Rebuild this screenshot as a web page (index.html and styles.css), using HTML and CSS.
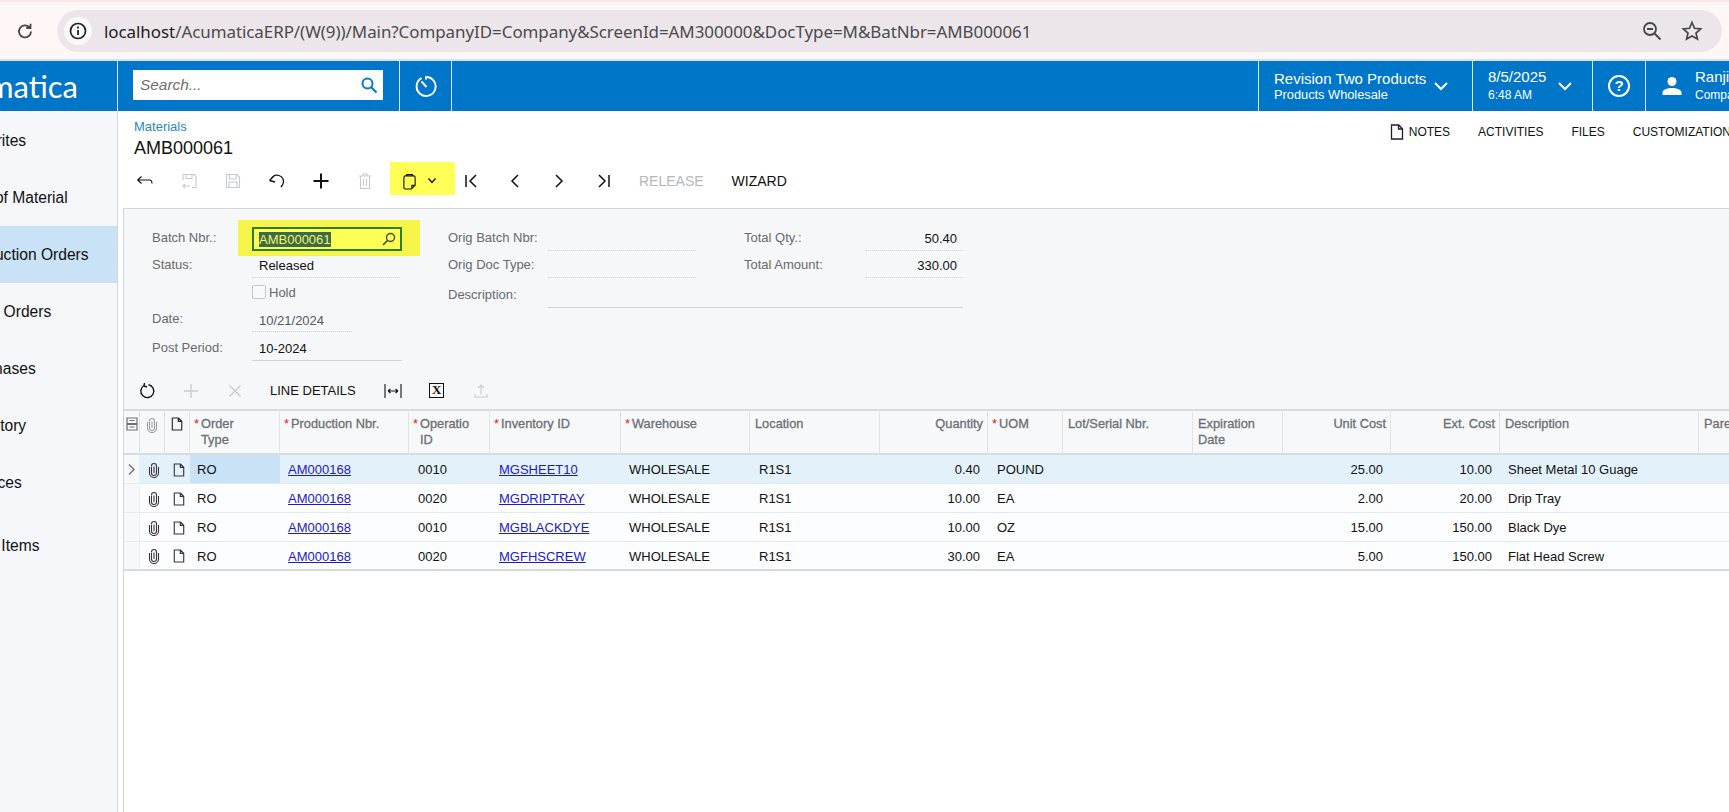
FILE: index.html
```html
<!DOCTYPE html>
<html lang="en">
<head>
<meta charset="utf-8">
<title>Materials - AMB000061</title>
<link rel="stylesheet" href="styles.css">
</head>
<body>
<svg class="defs" aria-hidden="true">
  <symbol id="i-note" viewBox="0 0 14 16"><path d="M1.500 1h7.200l3.800 3.800V15h-11zM8.500 1v4h4" fill="none" stroke="currentColor" stroke-width="1.300"/></symbol>
  <symbol id="i-clip" viewBox="0 0 12 16"><path d="M3.500 4.500v6.500a2.500 2.500 0 0 0 5 0V4a2.500 2.500 0 0 0-5 0M6 4.500v6.500M1.500 5v6a4.500 4.500 0 0 0 9 0V5" fill="none" stroke="currentColor" stroke-width="1.100"/></symbol>
  <symbol id="i-floppy" viewBox="0 0 18 18"><path d="M2.500 2.500h10.500l2.500 2.500v10.500h-13zM5.500 2.500v4.500h6.500v-4.500M5 15.500v-5.500h8v5.500" fill="none" stroke="currentColor" stroke-width="1.100"/></symbol>
</svg>

<header class="chrome">
  <svg class="chrome-reload" width="20" height="20" viewBox="0 0 20 20"><path d="M16 10.500a6 6 0 1 1-1.700-4.300M15.500 2.800v4.200h-4.200" fill="none" stroke="#474747" stroke-width="1.800"/></svg>
  <div class="urlbar">
    <span class="info-bubble"><svg width="20" height="20" viewBox="0 0 20 20"><circle cx="10" cy="10" r="7.500" fill="none" stroke="#222" stroke-width="1.700"/><path d="M10 9v5M10 5.600v1.800" stroke="#222" stroke-width="1.800"/></svg></span>
    <span class="url"><span class="url-host">localhost</span>/AcumaticaERP/(W(9))/Main?CompanyID=Company&amp;ScreenId=AM300000&amp;DocType=M&amp;BatNbr=AMB000061</span>
    <svg class="chrome-zoom" width="22" height="22" viewBox="0 0 22 22"><circle cx="9" cy="9" r="6" fill="none" stroke="#474747" stroke-width="1.800"/><path d="M6 9h6M13.500 13.500l6 6" stroke="#474747" stroke-width="1.800"/></svg>
    <svg class="chrome-star" width="22" height="22" viewBox="0 0 22 22"><path d="M11 2.500l2.500 5.800 6.200.6-4.700 4.100 1.400 6.100L11 15.900l-5.400 3.200 1.400-6.100-4.700-4.100 6.200-.6z" fill="none" stroke="#474747" stroke-width="1.700"/></svg>
  </div>
</header>

<nav class="appbar">
  <div class="logo-cell"><span class="logo">Acumatica</span></div>
  <div class="search-cell">
    <div class="search"><span class="search-text">Search...</span>
      <svg width="18" height="18" viewBox="0 0 18 18"><circle cx="7.500" cy="7.500" r="5" fill="none" stroke="#0b78c8" stroke-width="2"/><path d="M11 11l5.500 5.500" stroke="#0b78c8" stroke-width="2.200"/></svg>
    </div>
  </div>
  <div class="timer-cell"><svg width="24" height="24" viewBox="0 0 24 24"><path d="M7.500 4.200a9.500 9.500 0 1 0 4.500-1.200v2.500M7.500 7.500l5 5.500" fill="none" stroke="#fff" stroke-width="1.900"/></svg></div>
  <div class="bar-spacer"></div>
  <div class="bar-cell company-cell">
    <div class="bar-stack"><span class="bar-top">Revision Two Products</span><span class="bar-sub">Products Wholesale</span></div>
    <svg class="chev" width="16" height="16" viewBox="0 0 16 16"><path d="M2 5l6 6 6-6" fill="none" stroke="#fff" stroke-width="2"/></svg>
  </div>
  <div class="bar-cell date-cell">
    <div class="bar-stack"><span class="bar-top">8/5/2025</span><span class="bar-time">6:48 AM</span></div>
    <svg class="chev" width="16" height="16" viewBox="0 0 16 16"><path d="M2 5l6 6 6-6" fill="none" stroke="#fff" stroke-width="2"/></svg>
  </div>
  <div class="bar-cell help-cell"><span class="help">?</span></div>
  <div class="bar-cell user-cell">
    <svg class="user-icon" width="20" height="20" viewBox="0 0 20 20"><circle cx="10" cy="5.500" r="4.500" fill="#fff"/><path d="M.5 19v-2.500c0-3 5-4.500 9.500-4.500s9.500 1.500 9.500 4.500V19z" fill="#fff"/></svg>
    <div class="bar-stack user-stack"><span class="bar-top">Ranjith</span><span class="bar-time">Company</span></div>
  </div>
</nav>

<div class="main">
  <aside class="sidebar">
    <a class="nav-item">Favorites</a>
    <a class="nav-item">Bills of Material</a>
    <a class="nav-item is-active">Production Orders</a>
    <a class="nav-item">Prod. Orders</a>
    <a class="nav-item">Purchases</a>
    <a class="nav-item">Inventory</a>
    <a class="nav-item">Services</a>
    <a class="nav-item nav-last">Stock Items</a>
  </aside>

  <main class="content">
    <div class="page-head">
      <div class="page-titles">
        <a class="crumb">Materials</a>
        <div class="page-title">AMB000061</div>
      </div>
      <div class="tabs">
        <span class="tab"><svg class="tab-note" width="14" height="16"><use href="#i-note"/></svg>NOTES</span>
        <span class="tab">ACTIVITIES</span>
        <span class="tab">FILES</span>
        <span class="tab">CUSTOMIZATION</span>
      </div>
    </div>

    <div class="toolbar">
      <button class="tb"><svg width="18" height="18" viewBox="0 0 18 18"><path d="M1.500 8h12c1.500 0 2.500 1.500 2.500 3.500M1.500 8l4-3.500M1.500 8l4 3.500" fill="none" stroke="#111" stroke-width="1.100"/></svg></button>
      <button class="tb tb-off"><svg width="18" height="18" viewBox="0 0 18 18"><path d="M3 8V2.500h11l2 2v11h-4M6 2.500v4h6v-4M10 14H3M5 12l-2 2 2 2" fill="none" stroke="currentColor" stroke-width="1.100"/></svg></button>
      <button class="tb tb-off"><svg width="18" height="18"><use href="#i-floppy"/></svg></button>
      <button class="tb"><svg width="18" height="18" viewBox="0 0 18 18"><path d="M1.500 8.500l4.500-4.500M1.500 8.500l5.500 1.500M2 8.500C4 4.500 7.500 2.500 11 3.500c4 1.200 6 5.500 3.500 9.500l-1.500 2" fill="none" stroke="#111" stroke-width="1.300"/></svg></button>
      <button class="tb"><svg width="18" height="18" viewBox="0 0 18 18"><path d="M9 1.500v15M1.500 9h15" stroke="#111" stroke-width="2"/></svg></button>
      <button class="tb tb-off"><svg width="18" height="18" viewBox="0 0 18 18"><path d="M3 4h12M7 4V2h4v2M4.500 4v12.500h9V4M7.500 7v7M10.500 7v7" fill="none" stroke="currentColor" stroke-width="1.100"/></svg></button>
      <div class="paste-group">
        <svg width="15" height="17" viewBox="0 0 16 18"><path d="M2 5c0-1 .5-2 1.500-2h9c1 0 1.500 1 1.500 2v8l-4 4H3.500C2.500 17 2 16 2 15zM5 3V1.500h6V3M14 13h-3.500v4" fill="none" stroke="#111" stroke-width="1.200"/></svg>
        <svg width="10" height="8" viewBox="0 0 10 8"><path d="M1.500 1.500L5 5.500l3.500-4" fill="none" stroke="#111" stroke-width="1.400"/></svg>
      </div>
      <button class="tb tb-first"><svg width="18" height="18" viewBox="0 0 18 18"><path d="M3 3v12M13 3L7 9l6 6" fill="none" stroke="#111" stroke-width="1.500"/></svg></button>
      <button class="tb"><svg width="18" height="18" viewBox="0 0 18 18"><path d="M12 3L6 9l6 6" fill="none" stroke="#111" stroke-width="1.500"/></svg></button>
      <button class="tb"><svg width="18" height="18" viewBox="0 0 18 18"><path d="M6 3l6 6-6 6" fill="none" stroke="#111" stroke-width="1.500"/></svg></button>
      <button class="tb"><svg width="18" height="18" viewBox="0 0 18 18"><path d="M15 3v12M5 3l6 6-6 6" fill="none" stroke="#111" stroke-width="1.500"/></svg></button>
      <span class="tb-text tb-release">RELEASE</span>
      <span class="tb-text tb-wizard">WIZARD</span>
    </div>

    <section class="panel">
      <div class="form">
        <div class="form-col">
          <div class="row"><span class="lbl">Batch Nbr.:</span>
            <div class="batch">
              <span class="batch-glow"></span>
              <div class="batch-input"><span class="batch-sel">AMB000061</span>
                <svg width="16" height="16" viewBox="0 0 16 16"><circle cx="9.500" cy="6.500" r="4" fill="none" stroke="#3f4a1e" stroke-width="1.400"/><path d="M6.500 9.500L2 14" stroke="#3f4a1e" stroke-width="1.600"/></svg>
              </div>
            </div>
          </div>
          <div class="row"><span class="lbl">Status:</span><span class="val dotted w148">Released</span></div>
          <div class="row"><span class="lbl"></span><span class="hold"><span class="check"></span>Hold</span></div>
          <div class="row"><span class="lbl">Date:</span><span class="val val-muted dotted w100">10/21/2024</span></div>
          <div class="row row-tall"><span class="lbl">Post Period:</span><span class="val solid w150">10-2024</span></div>
        </div>
        <div class="form-col">
          <div class="row"><span class="lbl">Orig Batch Nbr:</span><span class="val dotted w148"></span></div>
          <div class="row"><span class="lbl">Orig Doc Type:</span><span class="val dotted w148"></span></div>
          <div class="row row-desc"><span class="lbl">Description:</span><span class="val solid w415"></span></div>
        </div>
        <div class="form-col col-totals">
          <div class="row"><span class="lbl lbl-total">Total Qty.:</span><span class="val dotted num">50.40</span></div>
          <div class="row"><span class="lbl lbl-total">Total Amount:</span><span class="val dotted num">330.00</span></div>
        </div>
      </div>

      <div class="grid-bar">
        <button class="gb"><svg width="18" height="18" viewBox="0 0 18 18"><path d="M6 3.500a6.500 6.500 0 1 0 4.500-.8M6.500 1L6 4l3 1" fill="none" stroke="#111" stroke-width="1.400"/></svg></button>
        <button class="gb gb-off"><svg width="16" height="16" viewBox="0 0 16 16"><path d="M8 1v14M1 8h14" stroke="currentColor" stroke-width="1.400"/></svg></button>
        <button class="gb gb-off"><svg width="16" height="16" viewBox="0 0 16 16"><path d="M2.500 2.500l11 11M13.500 2.500l-11 11" stroke="currentColor" stroke-width="1.300"/></svg></button>
        <span class="gb-text">LINE DETAILS</span>
        <button class="gb gb-fit"><svg width="18" height="16" viewBox="0 0 18 16"><path d="M1 1v14M17 1v14M4 8h10M4 8l2.500-2M4 8l2.500 2M14 8l-2.500-2M14 8l-2.500 2" fill="none" stroke="#111" stroke-width="1.100"/></svg></button>
        <button class="gb"><span class="excel">X</span></button>
        <button class="gb gb-off"><svg width="16" height="16" viewBox="0 0 16 16"><path d="M8 11V2M5 5l3-3 3 3M2 11v3h12v-3" fill="none" stroke="currentColor" stroke-width="1.100"/></svg></button>
      </div>

      <div class="grid">
        <div class="gh gh-icon"><svg width="12" height="14" viewBox="0 0 12 14"><path d="M1 1h10v5.500H1zM1 7.500h10V13H1zM3.500 3.500h5M3.500 10h5" fill="none" stroke="#6d7176" stroke-width="1.200"/></svg></div>
        <div class="gh gh-icon"><svg class="clip-head" width="12" height="16"><use href="#i-clip"/></svg></div>
        <div class="gh gh-icon"><svg class="note-ico" width="12" height="14"><use href="#i-note"/></svg></div>
        <div class="gh gh-star"><span class="star">*</span>Order<br>Type</div>
        <div class="gh gh-star"><span class="star">*</span>Production Nbr.</div>
        <div class="gh gh-star"><span class="star">*</span>Operatio<br>ID</div>
        <div class="gh gh-star"><span class="star">*</span>Inventory ID</div>
        <div class="gh gh-star"><span class="star">*</span>Warehouse</div>
        <div class="gh">Location</div>
        <div class="gh gh-num">Quantity</div>
        <div class="gh gh-star"><span class="star">*</span>UOM</div>
        <div class="gh">Lot/Serial Nbr.</div>
        <div class="gh">Expiration<br>Date</div>
        <div class="gh gh-num">Unit Cost</div>
        <div class="gh gh-num">Ext. Cost</div>
        <div class="gh">Description</div>
        <div class="gh">Parent</div>

        <div class="gr is-current">
          <div class="gc gc-gutter"><svg width="9" height="13" viewBox="0 0 9 13"><path d="M2 1.500l5 5-5 5" fill="none" stroke="#6d7176" stroke-width="1.400"/></svg></div>
          <div class="gc gc-icon"><svg width="12" height="16"><use href="#i-clip"/></svg></div>
          <div class="gc gc-icon"><svg width="12" height="14"><use href="#i-note"/></svg></div>
          <div class="gc gc-focus gc-type">RO</div><div class="gc"><a class="lnk">AM000168</a></div><div class="gc">0010</div><div class="gc"><a class="lnk">MGSHEET10</a></div><div class="gc">WHOLESALE</div><div class="gc">R1S1</div><div class="gc gc-num">0.40</div><div class="gc">POUND</div><div class="gc"></div><div class="gc"></div><div class="gc gc-num">25.00</div><div class="gc gc-num">10.00</div><div class="gc">Sheet Metal 10 Guage</div><div class="gc"></div>
        </div>
        <div class="gr">
          <div class="gc gc-gutter"></div>
          <div class="gc gc-icon"><svg width="12" height="16"><use href="#i-clip"/></svg></div>
          <div class="gc gc-icon"><svg width="12" height="14"><use href="#i-note"/></svg></div>
          <div class="gc gc-type">RO</div><div class="gc"><a class="lnk">AM000168</a></div><div class="gc">0020</div><div class="gc"><a class="lnk">MGDRIPTRAY</a></div><div class="gc">WHOLESALE</div><div class="gc">R1S1</div><div class="gc gc-num">10.00</div><div class="gc">EA</div><div class="gc"></div><div class="gc"></div><div class="gc gc-num">2.00</div><div class="gc gc-num">20.00</div><div class="gc">Drip Tray</div><div class="gc"></div>
        </div>
        <div class="gr">
          <div class="gc gc-gutter"></div>
          <div class="gc gc-icon"><svg width="12" height="16"><use href="#i-clip"/></svg></div>
          <div class="gc gc-icon"><svg width="12" height="14"><use href="#i-note"/></svg></div>
          <div class="gc gc-type">RO</div><div class="gc"><a class="lnk">AM000168</a></div><div class="gc">0010</div><div class="gc"><a class="lnk">MGBLACKDYE</a></div><div class="gc">WHOLESALE</div><div class="gc">R1S1</div><div class="gc gc-num">10.00</div><div class="gc">OZ</div><div class="gc"></div><div class="gc"></div><div class="gc gc-num">15.00</div><div class="gc gc-num">150.00</div><div class="gc">Black Dye</div><div class="gc"></div>
        </div>
        <div class="gr gr-last">
          <div class="gc gc-gutter"></div>
          <div class="gc gc-icon"><svg width="12" height="16"><use href="#i-clip"/></svg></div>
          <div class="gc gc-icon"><svg width="12" height="14"><use href="#i-note"/></svg></div>
          <div class="gc gc-type">RO</div><div class="gc"><a class="lnk">AM000168</a></div><div class="gc">0020</div><div class="gc"><a class="lnk">MGFHSCREW</a></div><div class="gc">WHOLESALE</div><div class="gc">R1S1</div><div class="gc gc-num">30.00</div><div class="gc">EA</div><div class="gc"></div><div class="gc"></div><div class="gc gc-num">5.00</div><div class="gc gc-num">150.00</div><div class="gc">Flat Head Screw</div><div class="gc"></div>
        </div>
      </div>
      <div class="grid-empty"></div>
    </section>
  </main>
</div>
</body>
</html>
```

FILE: styles.css
```css
* { box-sizing: border-box; }
html, body { margin: 0; height: 812px; overflow: hidden; background: #fff; }
body { font-family: "Liberation Sans", Arial, sans-serif; font-size: 13px; color: #111; display: flex; flex-direction: column; }
.defs { display: none; }
button { border: 0; background: none; padding: 0; font: inherit; color: inherit; display: flex; align-items: center; justify-content: center; }

/* browser chrome */
.chrome { height: 59px; flex: none; background: #fff6f6; border-top: 2px solid #fbe8e8; display: flex; align-items: flex-start; padding: 8px 7px 0 15px; gap: 22px; }
.chrome-reload { margin-top: 11px; flex: none; }
.urlbar { flex: 1; height: 42px; border-radius: 21px; background: #ece6ea; display: flex; align-items: center; padding: 0 19px 0 7px; }
.info-bubble { width: 28px; height: 28px; border-radius: 50%; background: #fbf8fa; display: flex; align-items: center; justify-content: center; margin-right: 12px; flex: none; }
.url { font-family: "Noto Sans", "Open Sans", sans-serif; font-size: 16.950px; color: #4a4a4e; white-space: nowrap; flex: 1; letter-spacing: -.05px; }
.url-host { color: #1c1c1e; }
.chrome-zoom { margin-right: 18px; }

/* blue application bar */
.appbar { height: 52px; flex: none; background: #0076c9; border-top: 2px solid #cfe4ee; display: flex; color: #fff; }
.logo-cell { width: 118px; border-right: 1px solid #d7ebf7; display: flex; justify-content: flex-end; align-items: center; padding: 0 39px 0 0; overflow: hidden; flex: none; }
.logo { font-family: "Lato", sans-serif; font-size: 31px; white-space: nowrap; }
.search-cell { width: 282px; border-right: 1px solid #d7ebf7; padding: 9px 15px 0; flex: none; }
.search { height: 30px; width: 250px; background: #fff; display: flex; align-items: center; justify-content: space-between; padding: 0 5px 0 7px; }
.search-text { font-size: 15.400px; font-style: italic; color: #6e6e6e; }
.timer-cell { width: 52px; border-right: 1px solid #d7ebf7; display: flex; align-items: center; justify-content: center; flex: none; }
.bar-spacer { flex: 1; }
.bar-cell { border-left: 1px solid #d7ebf7; display: flex; align-items: center; flex: none; }
.bar-stack { display: flex; flex-direction: column; }
.bar-top { font-size: 15px; line-height: 17px; white-space: nowrap; }
.bar-sub { font-size: 12.800px; line-height: 15px; white-space: nowrap; }
.bar-time { font-size: 12px; line-height: 17px; margin-top: 2px; white-space: nowrap; }
.company-cell { width: 214px; padding-left: 15px; gap: 7px; }
.date-cell { width: 120px; padding-left: 15px; gap: 11px; }
.help-cell { width: 53px; justify-content: center; }
.help { width: 22px; height: 22px; border: 2px solid #fff; border-radius: 50%; font-size: 15px; line-height: 18px; text-align: center; font-weight: bold; }
.user-cell { width: 84px; padding-left: 16px; gap: 13px; overflow: hidden; }
.user-icon { flex: none; }
.user-stack { margin-top: -1px; }

/* body layout */
.main { flex: 1; display: flex; min-height: 0; }
.sidebar { width: 118px; flex: none; background: #f5f7fa; border-right: 1px solid #d3d7db; overflow: hidden; padding-top: 1px; }
.nav-item { display: flex; align-items: center; height: 57px; font-size: 15.600px; white-space: nowrap; text-indent: -38px; color: #111; }
.nav-item.is-active { background: #c9e2f5; }
.nav-last { height: 70px; text-indent: -42px; }

.content { flex: 1; min-width: 0; display: flex; flex-direction: column; overflow: hidden; }
.page-head { height: 49px; flex: none; display: flex; justify-content: space-between; padding-left: 16px; }
.page-titles { padding-top: 8px; }
.crumb { display: block; font-size: 13px; line-height: 16px; color: #2a86c8; }
.page-title { font-size: 18px; line-height: 26px; }
.tabs { display: flex; gap: 28px; padding-top: 13px; font-size: 12px; line-height: 16px; margin-right: -2px; white-space: nowrap; }
.tab { display: flex; align-items: flex-start; }
.tab-note { margin-right: 5px; color: #2b1638; }

/* main toolbar */
.toolbar { height: 48px; flex: none; display: flex; align-items: flex-start; padding: 2px 0 0 5px; }
.tb { width: 44px; height: 33px; flex: none; padding-top: 5px; }
.tb-off { color: #c6cace; }
.paste-group { width: 65px; height: 33px; margin-left: 3px; background: #ffff55; display: flex; align-items: center; padding: 5px 0 0 12px; gap: 10px; flex: none; }
.tb-first { margin-left: -5px; width: 43px; }
.tb-text { font-size: 14px; line-height: 38px; }
.tb-release { margin-left: 14px; color: #b4b8bc; }
.tb-wizard { margin-left: 28px; }

/* form panel */
.panel { flex: 1; min-height: 0; margin-left: 5px; border-left: 1px solid #d3d7db; border-top: 1px solid #d3d7db; display: flex; flex-direction: column; }
.form { background: #f5f7f9; padding: 15px 0 11px 28px; display: flex; flex: none; }
.form-col { width: 296px; flex: none; }
.col-totals { width: 219px; }
.row { display: flex; height: 27px; align-items: stretch; }
.row-tall { height: 29px; padding-top: 2px; }
.row-desc { height: 30px; padding-top: 3px; }
.lbl { width: 100px; flex: none; color: #666a6e; font-size: 13px; line-height: 28px; white-space: nowrap; }
.lbl-total { width: 121px; }
.val { padding-left: 7px; line-height: 29px; font-size: 13px; display: block; flex: none; }
.val-muted { color: #55595d; }
.dotted { border-bottom: 1px dotted #d0d4d8; }
.solid { border-bottom: 1px solid #cfd3d7; }
.w148 { width: 148px; }
.w100 { width: 100px; line-height: 31px; }
.w150 { width: 150px; }
.w415 { width: 415px; }
.num { width: 98px; text-align: right; padding-right: 6px; }
.hold { display: flex; align-items: center; gap: 3px; color: #666a6e; padding-top: 1px; }
.check { width: 14px; height: 14px; border: 1px solid #c4c8cc; border-radius: 2px; background: #f8f9fa; }
.batch { position: relative; width: 150px; height: 24px; margin-top: 3px; }
.batch-glow { position: absolute; left: -14px; right: -18px; top: -7px; bottom: -5px; background: #f4f548; }
.batch-input { position: relative; height: 24px; background: #ffff55; border: 2px solid #2f7a35; display: flex; align-items: center; justify-content: space-between; padding: 0 3px 0 5px; }
.batch-sel { background: #3d6b48; color: #f3f56a; line-height: 15px; }

/* grid toolbar */
.grid-bar { height: 37px; flex: none; background: #f5f7f9; display: flex; align-items: center; padding-left: 1px; }
.gb { width: 44px; height: 30px; flex: none; }
.gb-off { color: #c8ccd0; }
.gb-text { margin-left: 13px; font-size: 13px; white-space: nowrap; }
.gb-fit { margin-left: 15px; }
.excel { width: 15px; height: 15px; border: 1.500px solid #111; font-family: "Liberation Serif", serif; font-weight: bold; font-size: 13px; line-height: 12px; text-align: center; background: #f5f7f9; }

/* data grid */
.grid { display: grid; grid-template-columns: 16px 25px 25px 90px 129px 81px 131px 129px 130px 108px 75px 130px 90px 108px 109px 199px 120px; flex: none; }
.gr { display: contents; }
.gh { height: 46px; padding: 5px 5px 0; background: #f7f8fa; border-top: 2px solid #d8dcdf; border-bottom: 2px solid #d8dcdf; border-right: 1px solid #e2e5e8; color: #6b6f74; font-size: 12.800px; line-height: 16px; white-space: nowrap; overflow: hidden; -webkit-text-stroke: .3px #6b6f74; }
.gh-star { padding-left: 11px; position: relative; }
.star { position: absolute; left: 4px; top: 5px; color: #e02020; -webkit-text-stroke: 0; }
.gh-num { text-align: right; padding-right: 4px; }
.gh-icon { padding: 6px 0 0; display: flex; justify-content: center; align-items: flex-start; color: #222; }
.clip-head { color: #9ca0a5; }
.gc { height: 29px; padding: 0 9px; line-height: 29px; background: #fcfdfe; border-bottom: 1px solid #e3ebf1; white-space: nowrap; overflow: hidden; font-size: 13px; }
.gc:nth-child(5), .gc:nth-child(8), .gc:nth-child(16) { padding-left: 8px; }
.gc-type { padding-left: 7px; }
.gc-num { text-align: right; padding-right: 8px; }
.gc-gutter { background: #f7f8fa; padding: 0; display: flex; align-items: center; justify-content: center; border-right: 1px solid #eef0f2; }
.gc-icon { padding: 1px 0 0 2px; display: flex; align-items: center; justify-content: center; color: #3a3040; }
.is-current .gc { background: #e3f1fa; }
.is-current .gc-gutter { background: #f7f8fa; }
.is-current .gc-focus { background: #c9e2f5; }
.gr-last .gc { border-bottom: 2px solid #d8dcdf; }
.lnk { color: #1a1ac8; text-decoration: underline; }
.grid-empty { flex: 1; background: #fff; }
```
